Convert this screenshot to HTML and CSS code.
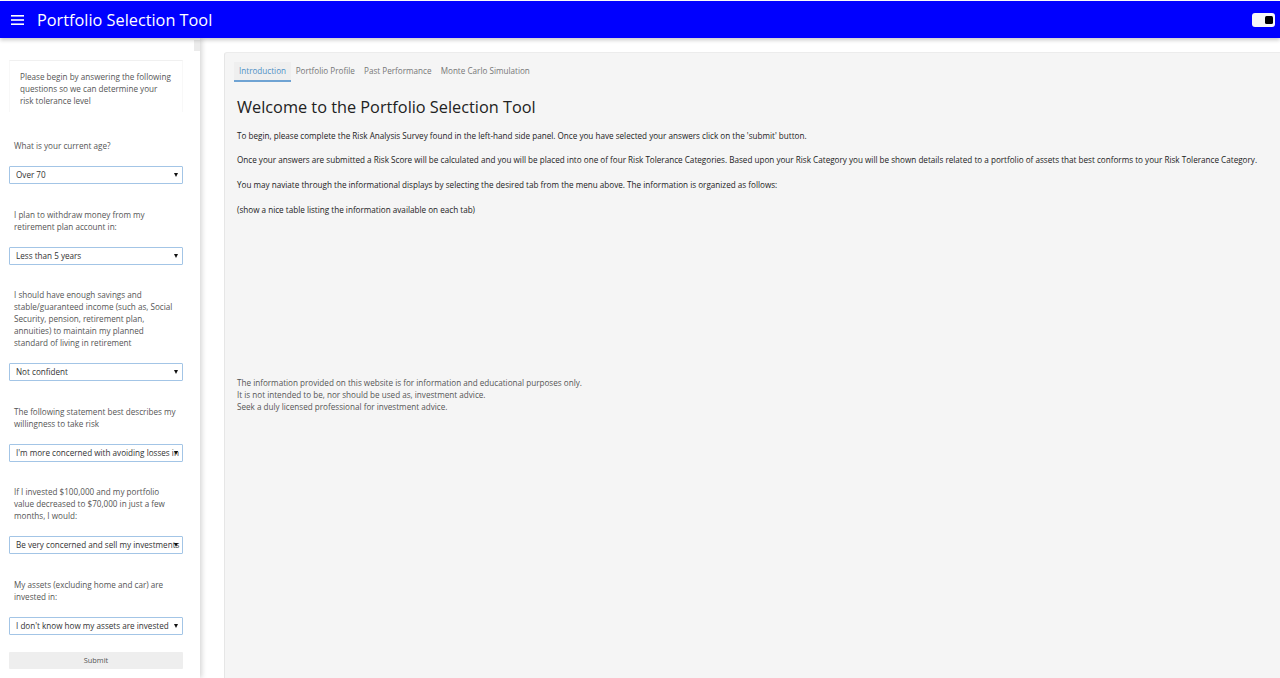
FILE: index.html
```html
<!DOCTYPE html>
<html lang="en">
<head>
<meta charset="utf-8">
<title>Portfolio Selection Tool</title>
<link rel="stylesheet" href="styles.css">
</head>
<body>
<header class="topbar">
  <svg class="hamburger" width="13" height="10" viewBox="0 0 13 10">
    <rect x="0" y="0" width="13" height="1.6" fill="#fff"/>
    <rect x="0" y="4.2" width="13" height="1.6" fill="#fff"/>
    <rect x="0" y="8.4" width="13" height="1.6" fill="#fff"/>
  </svg>
  <div class="title">Portfolio Selection Tool</div>
  <div class="spacer"></div>
  <div class="toggle"><span class="toggle-knob"></span></div>
</header>
<div class="layout">
  <aside class="sidebar">
    <div class="scroll-thumb"></div>
    <div class="intro-box">Please begin by answering the following<br>questions so we can determine your<br>risk tolerance level</div>

    <div class="group">
      <div class="label">What is your current age?</div>
      <div class="select"><span class="select-text">Over 70</span><span class="caret"></span></div>
    </div>
    <div class="group">
      <div class="label">I plan to withdraw money from my<br>retirement plan account in:</div>
      <div class="select"><span class="select-text">Less than 5 years</span><span class="caret"></span></div>
    </div>
    <div class="group">
      <div class="label">I should have enough savings and<br>stable/guaranteed income (such as, Social<br>Security, pension, retirement plan,<br>annuities) to maintain my planned<br>standard of living in retirement</div>
      <div class="select"><span class="select-text">Not confident</span><span class="caret"></span></div>
    </div>
    <div class="group">
      <div class="label">The following statement best describes my<br>willingness to take risk</div>
      <div class="select"><span class="select-text">I'm more concerned with avoiding losses in my investments</span><span class="caret"></span></div>
    </div>
    <div class="group">
      <div class="label">If I invested $100,000 and my portfolio<br>value decreased to $70,000 in just a few<br>months, I would:</div>
      <div class="select"><span class="select-text">Be very concerned and sell my investments</span><span class="caret"></span></div>
    </div>
    <div class="group">
      <div class="label">My assets (excluding home and car) are<br>invested in:</div>
      <div class="select"><span class="select-text">I don't know how my assets are invested</span><span class="caret"></span></div>
    </div>
    <div class="submit">Submit</div>
  </aside>

  <main class="main">
    <section class="panel">
      <nav class="tabs">
        <span class="tab active">Introduction</span>
        <span class="tab">Portfolio Profile</span>
        <span class="tab">Past Performance</span>
        <span class="tab">Monte Carlo Simulation</span>
      </nav>
      <div class="content">
        <h1 class="heading">Welcome to the Portfolio Selection Tool</h1>
        <p>To begin, please complete the Risk Analysis Survey found in the left-hand side panel. Once you have selected your answers click on the 'submit' button.</p>
        <p>Once your answers are submitted a Risk Score will be calculated and you will be placed into one of four Risk Tolerance Categories. Based upon your Risk Category you will be shown details related to a portfolio of assets that best conforms to your Risk Tolerance Category.</p>
        <p>You may naviate through the informational displays by selecting the desired tab from the menu above. The information is organized as follows:</p>
        <p>(show a nice table listing the information available on each tab)</p>
        <div class="disclaimer">The information provided on this website is for information and educational purposes only.<br>It is not intended to be, nor should be used as, investment advice.<br>Seek a duly licensed professional for investment advice.</div>
      </div>
    </section>
  </main>
</div>
</body>
</html>
```
FILE: styles.css
```css
* { box-sizing: border-box; }
html, body { margin: 0; padding: 0; height: 100%; overflow: hidden; }
body {
  font-family: "Open Sans", "Noto Sans", sans-serif;
  font-size: 8.15px;
  color: #333;
  background: #fff;
}

.topbar {
  position: relative;
  z-index: 3;
  margin-top: 1px;
  height: 37px;
  background: #0000ff;
  display: flex;
  align-items: center;
  padding: 0 5px 0 11px;
  box-shadow: 0 2px 4px rgba(0, 0, 0, 0.22);
}
.hamburger { display: block; flex: none; }
.title {
  margin-left: 13px;
  color: #fff;
  font-size: 16.3px;
  line-height: 20px;
}
.spacer { flex: 1; }
.toggle {
  width: 23px;
  height: 14px;
  background: #f7f7f7;
  border-radius: 3px;
  display: flex;
  align-items: center;
  justify-content: flex-end;
  padding-right: 2px;
}
.toggle-knob {
  width: 8px;
  height: 8px;
  background: #000;
  border-radius: 1.5px;
}

.layout {
  display: flex;
  height: calc(100% - 38px);
}

.sidebar {
  position: relative;
  z-index: 2;
  flex: none;
  width: 200px;
  background: #fff;
  box-shadow: 2px 0 5px rgba(0, 0, 0, 0.16);
  padding: 22px 17px 0 9px;
  color: #555;
  overflow: hidden;
}
.scroll-thumb {
  position: absolute;
  left: 194px;
  top: 2px;
  width: 6px;
  height: 11px;
  background: #ebebeb;
}
.intro-box {
  border-top: 1px solid #f0f0f0;
  border-left: 1px solid #f8f8f8;
  border-right: 1px solid #f8f8f8;
  padding: 10px 6px 5px 10px;
  line-height: 12px;
  height: 52px;
  margin-bottom: 28px;
}
.group { margin-bottom: 24.6px; }
.label {
  padding: 0 0 0 5px;
  line-height: 12px;
  margin-bottom: 14px;
  white-space: nowrap;
}
.select {
  position: relative;
  height: 18px;
  border: 1px solid #a3c5e6;
  border-radius: 1px;
  background: #fff;
  padding: 0 2px 0 6px;
  line-height: 16px;
  color: #333;
  overflow: hidden;
  white-space: nowrap;
}
.select-text { display: block; overflow: hidden; }
.caret {
  position: absolute;
  right: 4px;
  top: 6px;
  width: 0;
  height: 0;
  border-left: 2.5px solid transparent;
  border-right: 2.5px solid transparent;
  border-top: 4px solid #111;
}
.submit {
  margin-top: -7.6px;
  height: 17px;
  line-height: 17px;
  background: #eeeeee;
  border-radius: 1px;
  text-align: center;
  font-size: 7.4px;
  color: #555;
}

.main {
  flex: 1;
  min-width: 0;
  padding: 14px 0 0 24px;
  background: #fff;
}
.panel {
  height: 100%;
  background: #f5f5f5;
  border-top: 1px solid #ececec;
  border-left: 1px solid #e6e6e6;
  border-top-left-radius: 3px;
  padding: 9px 0 0 9px;
}
.tabs { display: flex; }
.tab {
  padding: 0 4.6px;
  line-height: 18px;
  color: #777;
  border-bottom: 2px solid transparent;
}
.tab.active {
  padding: 0 5px;
  color: #4f8fc6;
  background: #efefef;
  border-bottom-color: #6fa3d3;
}
.content { padding-left: 3px; }
.heading {
  margin: 15px 0 12.5px;
  font-size: 16.3px;
  line-height: 20px;
  font-weight: 400;
  color: #222;
}
.content p {
  margin: 0 0 12.7px;
  line-height: 12px;
  color: #222;
  white-space: nowrap;
}
.disclaimer {
  margin-top: 161px;
  line-height: 12px;
  color: #555;
}
```
